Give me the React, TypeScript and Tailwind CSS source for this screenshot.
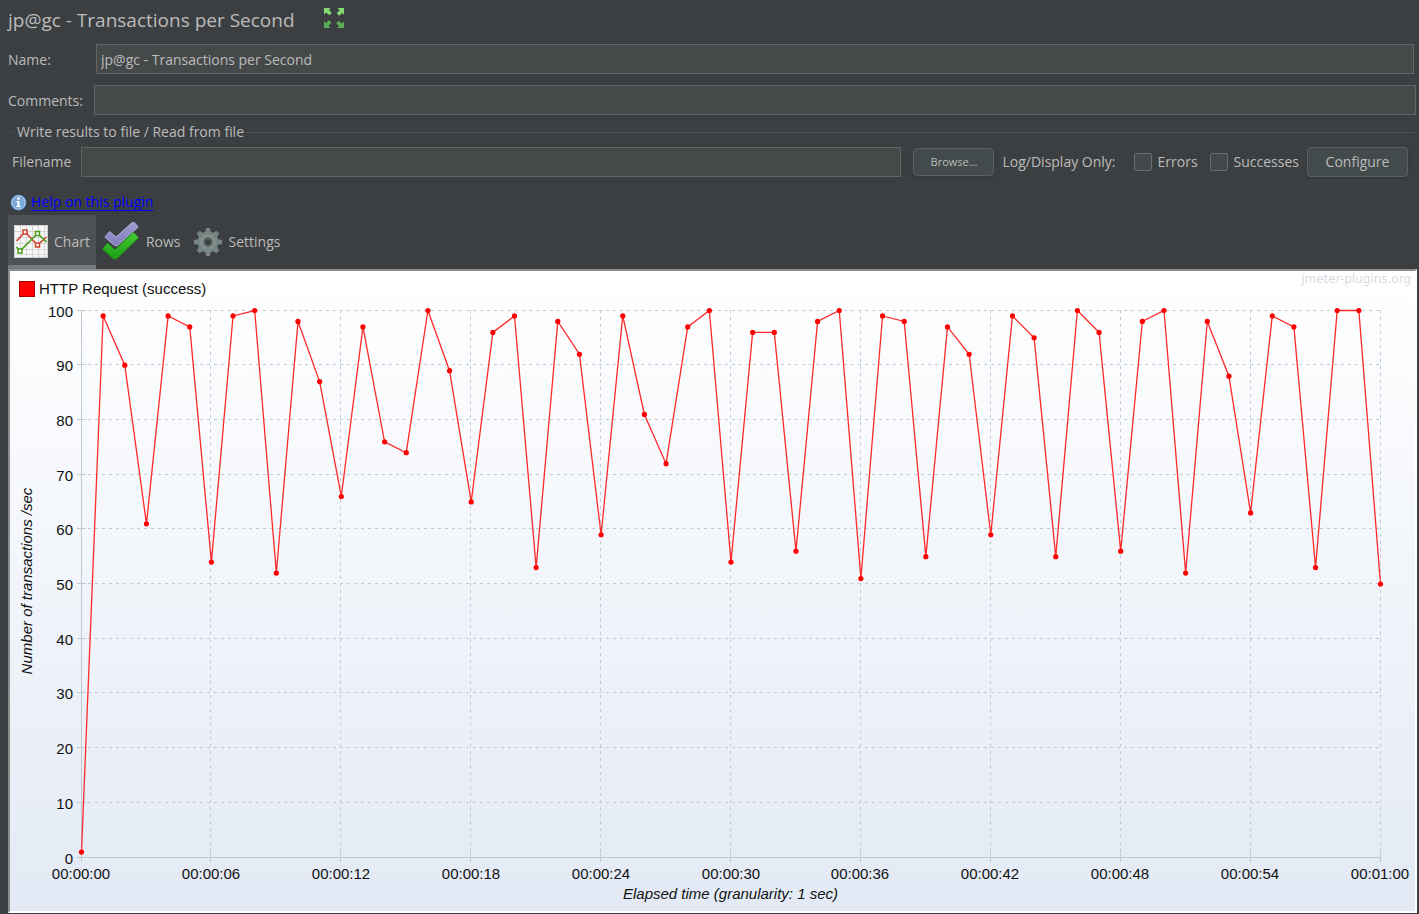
import type { ReactNode } from 'react';

const TPS = [
  1, 99, 90, 61, 99, 97, 54, 99, 100, 52, 98, 87, 66, 97, 76, 74, 100, 89, 65, 96, 99,
  53, 98, 92, 59, 99, 81, 72, 97, 100, 54, 96, 96, 56, 98, 100, 51, 99, 98, 55, 97,
  92, 59, 99, 95, 55, 100, 96, 56, 98, 100, 52, 98, 88, 63, 99, 97, 53, 100, 100, 50,
];

// Plot area inside the chart drawing
const LEFT = 71;
const RIGHT = 1370;
const TOP = 9;
const BOTTOM = 556;

const xAt = (sec: number) => LEFT + (sec / 60) * (RIGHT - LEFT);
const yAt = (value: number) => BOTTOM - (value / 100) * (BOTTOM - TOP);
const crisp = (n: number) => Math.floor(n) + 0.5;

function formatTime(sec: number) {
  const m = String(Math.floor(sec / 60)).padStart(2, '0');
  const s = String(sec % 60).padStart(2, '0');
  return `00:${m}:${s}`;
}

function ExpandIcon() {
  return (
    <svg width="22" height="22" viewBox="0 0 22 22" aria-hidden="true">
      {[0, 90, 180, 270].map((angle) => (
        <path
          key={angle}
          transform={`rotate(${angle} 11 11)`}
          d="M1 1h6.500L6 3l2.800 2.800-2.500 2.500L3.200 5.500 1 7.500z"
          fill={angle < 180 ? '#86d873' : '#5bad57'}
        />
      ))}
    </svg>
  );
}

function InfoIcon() {
  return (
    <svg width="17" height="17" viewBox="0 0 17 17" aria-hidden="true">
      <circle cx="8.500" cy="8.500" r="8" fill="#3f78b5" />
      <circle cx="8.500" cy="8.500" r="6.800" fill="#7ba9da" stroke="#c9ddf2" strokeWidth="0.900" />
      <circle cx="8.500" cy="4.600" r="1.300" fill="#fff" />
      <path d="M6.500 7h3v4.700h1.200V13H6.300v-1.300h1.200V8.300h-1z" fill="#fff" />
    </svg>
  );
}

function ChartIcon() {
  return (
    <svg width="34" height="34" viewBox="0 0 34 34" aria-hidden="true">
      <rect x="0.500" y="0.500" width="33" height="32" fill="#f7f7f7" stroke="#cfcfcf" />
      <path
        d="M6.500 1v31M12.500 1v31M18.500 1v31M24.500 1v31M30.500 1v31M1 6.500h32M1 12.500h32M1 18.500h32M1 24.500h32M1 29.500h32"
        stroke="#d6d6d6"
      />
      <g fill="none" strokeWidth="1.600">
        <path d="M2.500 16L11 7l12.500 13 9-8" stroke="#d2442f" />
        <path d="M2.500 22L6 26 23.500 8.500l9 8.500" stroke="#4b9b1d" />
      </g>
      <g fill="#fff" strokeWidth="1.500">
        <path d="M9 5h4v4H9zM21.500 18h4v4h-4z" stroke="#d2442f" />
        <path d="M4 24h4v4H4zM21.500 6.500h4v4h-4z" stroke="#4b9b1d" />
      </g>
    </svg>
  );
}

function RowsIcon() {
  return (
    <svg width="38" height="40" viewBox="0 0 38 40" aria-hidden="true">
      <defs>
        <linearGradient id="tickBack" x1="0" y1="0" x2="0" y2="1">
          <stop offset="0" stopColor="#9a98ce" />
          <stop offset="1" stopColor="#8683c0" />
        </linearGradient>
        <linearGradient id="tickFront" x1="0" y1="0" x2="0" y2="1">
          <stop offset="0" stopColor="#42c92f" />
          <stop offset="1" stopColor="#22a41b" />
        </linearGradient>
      </defs>
      <g fill="none" strokeLinejoin="round">
        <path d="M5 12l9 8L34 2" stroke="#b6b5e0" strokeWidth="8" />
        <path d="M5 12l9 8L34 2" stroke="url(#tickBack)" strokeWidth="6.500" />
        <path d="M3 24l10 9 21-20" stroke="#1d8a18" strokeWidth="8.500" />
        <path d="M3 24l10 9 21-20" stroke="url(#tickFront)" strokeWidth="7" />
      </g>
    </svg>
  );
}

function GearIcon() {
  return (
    <svg width="30" height="30" viewBox="0 0 30 30" aria-hidden="true">
      <g fill="#768482">
        {[0, 45, 90, 135, 180, 225, 270, 315].map((angle) => (
          <path key={angle} transform={`rotate(${angle} 15 15)`} d="M12 6l1-5h4l1 5z" />
        ))}
        <circle cx="15" cy="15" r="10.500" />
      </g>
      <circle cx="15" cy="15" r="7.500" fill="#86928f" />
      <circle cx="15" cy="15" r="5" fill="#5a6665" />
      <circle cx="15" cy="15" r="2.800" fill="#3c3f41" />
    </svg>
  );
}

function Tab({ label, active = false, children }: { label: string; active?: boolean; children: ReactNode }) {
  return (
    <button
      type="button"
      role="tab"
      aria-selected={active}
      className={
        active
          ? 'flex h-[54px] items-center gap-1.5 border-b-4 border-[#747a80] bg-[#4e5254] px-1.5 pt-1'
          : 'flex h-[54px] items-center gap-1.5 border-b-4 border-transparent px-1.5 pt-1'
      }
    >
      {children}
      {label}
    </button>
  );
}

function TransactionsChart() {
  const seconds = Array.from({ length: 11 }, (_, i) => i * 6);
  const values = Array.from({ length: 11 }, (_, i) => i * 10);
  const line = TPS.map((v, i) => `${xAt(i) + 0.5},${yAt(v) + 0.5}`).join(' ');

  return (
    <svg
      viewBox="0 0 1405 610"
      className="block w-full font-['Liberation_Sans',Arial,sans-serif] text-[15px]"
      role="img"
      aria-label="Transactions per second over elapsed time"
    >
      {/* Grid */}
      <g stroke="#c3c9d4" strokeDasharray="3 4">
        {values.slice(1).map((v) => (
          <line key={v} x1={LEFT} x2={RIGHT} y1={crisp(yAt(v))} y2={crisp(yAt(v))} />
        ))}
        {seconds.slice(1).map((s) => (
          <line key={s} x1={crisp(xAt(s))} x2={crisp(xAt(s))} y1={TOP} y2={BOTTOM} />
        ))}
      </g>

      {/* Axes and ticks */}
      <g stroke="#c1c8d3">
        <line x1={crisp(LEFT)} x2={crisp(LEFT)} y1={TOP} y2={BOTTOM + 5} />
        <line x1={LEFT - 4} x2={RIGHT} y1={crisp(BOTTOM)} y2={crisp(BOTTOM)} />
        {values.map((v) => (
          <line key={v} x1={LEFT - 4} x2={LEFT + 5} y1={crisp(yAt(v))} y2={crisp(yAt(v))} />
        ))}
        {seconds.map((s) => (
          <line key={s} x1={crisp(xAt(s))} x2={crisp(xAt(s))} y1={BOTTOM - 4} y2={BOTTOM + 5} />
        ))}
      </g>

      <g fill="#111">
        {values.map((v) => (
          <text key={v} x={LEFT - 8} y={Math.floor(yAt(v)) + 7} textAnchor="end">
            {v}
          </text>
        ))}
        {seconds.map((s) => (
          <text key={s} x={Math.round(xAt(s))} y={BOTTOM + 22} textAnchor="middle">
            {formatTime(s)}
          </text>
        ))}
        <text x={(LEFT + RIGHT) / 2} y={BOTTOM + 42} textAnchor="middle" fontStyle="italic">
          Elapsed time (granularity: 1 sec)
        </text>
        <text transform="translate(22 280) rotate(-90)" textAnchor="middle" fontStyle="italic">
          Number of transactions /sec
        </text>
      </g>

      <polyline points={line} fill="none" stroke="#ff2a2a" strokeWidth="1.300" />
      {TPS.map((v, i) => (
        <circle key={i} cx={xAt(i) + 0.5} cy={yAt(v) + 0.5} r="2.600" fill="#f00" />
      ))}
    </svg>
  );
}

const field = 'h-[30px] min-w-0 flex-1 border border-[#646464] bg-[#45494a] px-1 outline-none';
const checkbox = 'size-[18px] appearance-none rounded-xs border border-[#6b6b6b] bg-[#43494a] checked:bg-[#6b6b6b]';
const actionButton = 'rounded-sm border border-[#5e6060] bg-[#434a4b] shadow-sm';

export default function App() {
  return (
    <main className="min-h-screen bg-[#3c3f41] pl-2 font-['Open_Sans','Noto_Sans',sans-serif] text-[14px] leading-5 text-[#bbbbbb]">
      <header className="flex h-11 items-center gap-7 pb-1">
        <h1 className="text-[19px] leading-6">jp@gc - Transactions per Second</h1>
        <button type="button" aria-label="Expand" className="pb-1">
          <ExpandIcon />
        </button>
      </header>

      <div className="flex items-center pr-[5px]">
        <label htmlFor="name" className="w-[88px] pt-0.5">Name:</label>
        <input id="name" defaultValue="jp@gc - Transactions per Second" className={field} />
      </div>
      <div className="mt-[11px] flex items-center pr-[3px]">
        <label htmlFor="comments" className="w-[86px] pt-0.5">Comments:</label>
        <input id="comments" className={field} />
      </div>

      {/* Results file */}
      <fieldset className="mx-1 mt-[7px] min-w-0">
        <legend className="flex w-full items-center gap-0.5 before:h-px before:w-[3px] before:bg-[#515151] after:h-px after:flex-1 after:bg-[#515151]">
          Write results to file / Read from file
        </legend>
        <div className="flex items-center pr-1 pt-[5px]">
          <label htmlFor="filename" className="w-[69px]">Filename</label>
          <input id="filename" className={field} />
          <button type="button" className={`${actionButton} ml-3 h-7 w-[81px] text-[11px]`}>Browse...</button>
          <span className="ml-2">Log/Display Only:</span>
          <label className="ml-[18px] flex items-center gap-1.5">
            <input type="checkbox" className={checkbox} />
            Errors
          </label>
          <label className="ml-3 flex items-center gap-1.5">
            <input type="checkbox" className={checkbox} />
            Successes
          </label>
          <button type="button" className={`${actionButton} ml-2 mr-[3px] h-[30px] w-[101px]`}>Configure</button>
        </div>
      </fieldset>

      <div className="mt-[15px] flex items-center gap-1 pl-0.5">
        <InfoIcon />
        <a href="#help" className="text-[#0000ff] underline underline-offset-3">Help on this plugin</a>
      </div>

      <div role="tablist" className="mt-[3px] flex">
        <Tab label="Chart" active>
          <ChartIcon />
        </Tab>
        <Tab label="Rows">
          <RowsIcon />
        </Tab>
        <Tab label="Settings">
          <GearIcon />
        </Tab>
      </div>

      {/* Chart panel */}
      <section className="mr-0.5 border-2 border-b-white border-l-[#8c8c8c] border-r-white border-t-[#8c8c8c] bg-linear-to-b from-white to-[#e3eaf5] font-['Liberation_Sans',Arial,sans-serif] text-[15px] text-[#111]">
        <div className="flex h-[30px] items-start justify-between pl-[9px] pr-1">
          <div className="flex items-center gap-1 pt-2">
            <span className="size-4 border border-[#a00] bg-[#f00]" />
            HTTP Request (success)
          </div>
          <span className="font-['DejaVu_Sans',sans-serif] text-[12px] leading-4 text-[#d8dbe4]">jmeter-plugins.org</span>
        </div>
        <TransactionsChart />
      </section>
    </main>
  );
}
